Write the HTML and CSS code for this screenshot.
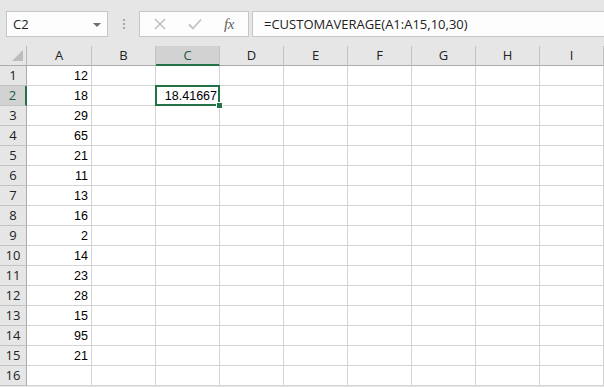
FILE: index.html
```html
<!DOCTYPE html>
<html>
<head>
<meta charset="utf-8">
<link rel="stylesheet" href="styles.css">
</head>
<body>
<div class="app">
  <div class="toolbar">
    <div class="namebox">
      <span class="name">C2</span>
      <span class="caret"></span>
    </div>
    <div class="grip"><i></i><i></i><i></i></div>
    <div class="fxbox">
      <svg class="btn-x" width="12" height="12" viewBox="0 0 12 12"><path d="M1 1L11 11M11 1L1 11" stroke="#c2c2c2" stroke-width="1.6" fill="none"/></svg>
      <svg class="btn-ok" width="14" height="12" viewBox="0 0 14 12"><path d="M1 6.5L5 10.5L13 1.5" stroke="#c2c2c2" stroke-width="1.8" fill="none"/></svg>
      <span class="fx">fx</span>
    </div>
    <div class="formula">=CUSTOMAVERAGE(A1:A15,10,30)</div>
  </div>
  <div class="sheet" id="sheet"></div>
</div>
<script src="app.js"></script>
</body>
</html>
```
FILE: app.js
```js
(function () {
  var sheet = document.getElementById('sheet');
  var cols = ['A','B','C','D','E','F','G','H','I'];
  var data = [12,18,29,65,21,11,13,16,2,14,23,28,15,95,21,null];
  function el(cls, text) {
    var d = document.createElement('div');
    d.className = cls;
    if (text !== undefined && text !== null) d.textContent = text;
    sheet.appendChild(d);
    return d;
  }
  var corner = el('corner');
  var tri = document.createElement('span');
  tri.className = 'tri';
  corner.appendChild(tri);
  cols.forEach(function (c) {
    el('colhead' + (c === 'C' ? ' sel' : ''), c);
  });
  for (var r = 1; r <= 16; r++) {
    el('rowhead' + (r === 2 ? ' sel' : ''), String(r));
    cols.forEach(function (c) {
      var v = '';
      if (c === 'A' && data[r - 1] !== null) v = String(data[r - 1]);
      if (c === 'C' && r === 2) v = '18.41667';
      var cell = el('cell' + (c === 'C' && r === 2 ? ' active' : ''), v);
      if (c === 'C' && r === 2) {
        var h = document.createElement('span');
        h.className = 'handle';
        cell.appendChild(h);
      }
    });
  }
})();
```
FILE: styles.css
```css
html, body {
  margin: 0;
  padding: 0;
  background: #ffffff;
}
.app {
  width: 604px;
  height: 387px;
  overflow: hidden;
  background: #e6e6e6;
  font-family: "Open Sans", "Noto Sans", sans-serif;
}
.toolbar {
  height: 46px;
  box-sizing: border-box;
  padding: 11px 0 0 6px;
  display: flex;
  align-items: flex-start;
}
.namebox {
  width: 102px;
  height: 26px;
  box-sizing: border-box;
  border: 1px solid #c6c6c6;
  background: #fdfdfd;
  display: flex;
  align-items: center;
  justify-content: space-between;
  padding: 0 6px 0 6px;
}
.name {
  font-size: 13px;
  color: #222;
}
.caret {
  width: 0;
  height: 0;
  border-left: 4px solid transparent;
  border-right: 4px solid transparent;
  border-top: 4px solid #6d6d6d;
  margin-top: 1px;
}
.grip {
  width: 31px;
  height: 26px;
  display: flex;
  flex-direction: column;
  align-items: center;
  justify-content: center;
  gap: 2px;
}
.grip i {
  display: block;
  width: 2px;
  height: 2px;
  background: #a8a8a8;
}
.fxbox {
  width: 110px;
  height: 26px;
  box-sizing: border-box;
  border: 1px solid #c6c6c6;
  background: #fdfdfd;
  display: flex;
  align-items: center;
  padding-left: 14px;
}
.btn-x { margin-right: 22px; }
.btn-ok { margin-right: 22px; }
.fx {
  font-family: "Liberation Serif", serif;
  font-style: italic;
  font-size: 15px;
  color: #5e5e5e;
  letter-spacing: -0.5px;
}
.formula {
  margin-left: 3px;
  flex: 1;
  height: 26px;
  box-sizing: border-box;
  border: 1px solid #c6c6c6;
  border-right: none;
  background: #fdfdfd;
  font-size: 13px;
  color: #222;
  line-height: 24px;
  padding-left: 11px;
  white-space: nowrap;
}
.sheet {
  display: grid;
  grid-template-columns: 27px 65px repeat(8, 64px);
  grid-auto-rows: 20px;
}
.corner, .colhead, .rowhead, .cell {
  box-sizing: border-box;
}
.corner {
  background: #e6e6e6;
  border-right: 1px solid #b9b9b9;
  border-bottom: 1px solid #ababab;
  display: flex;
  align-items: flex-end;
  justify-content: flex-end;
  padding: 0 3px 4px 0;
}
.tri {
  width: 11px;
  height: 11px;
  background: #bcbcbc;
  clip-path: polygon(100% 0, 100% 100%, 0 100%);
}
.colhead {
  background: #e6e6e6;
  border-right: 1px solid #c3c3c3;
  border-bottom: 1px solid #ababab;
  text-align: center;
  font-size: 13px;
  line-height: 19px;
  color: #222;
}
.colhead.sel {
  background: #d2d2d2;
  border-bottom: 2px solid #217346;
  color: #1e5c3a;
  line-height: 18px;
}
.rowhead {
  background: #e6e6e6;
  border-right: 1px solid #ababab;
  border-bottom: 1px solid #c3c3c3;
  text-align: center;
  font-size: 13px;
  line-height: 19px;
  color: #222;
}
.rowhead.sel {
  background: #d2d2d2;
  border-right: 2px solid #217346;
  color: #1e5c3a;
}
.cell {
  background: #ffffff;
  border-right: 1px solid #d4d4d4;
  border-bottom: 1px solid #d4d4d4;
  text-align: right;
  padding: 0 3px 0 0;
  font-family: "Liberation Sans", Arial, sans-serif;
  font-size: 12.5px;
  line-height: 21px;
  color: #000;
}
.cell.active {
  position: relative;
  padding-right: 2px;
}
.cell.active::after {
  content: "";
  position: absolute;
  left: -1px;
  top: -1px;
  right: -1px;
  bottom: -1px;
  border: 2px solid #217346;
}
.handle {
  position: absolute;
  right: -4px;
  bottom: -4px;
  width: 5px;
  height: 5px;
  background: #217346;
  border: 1px solid #ffffff;
  z-index: 2;
}
```
